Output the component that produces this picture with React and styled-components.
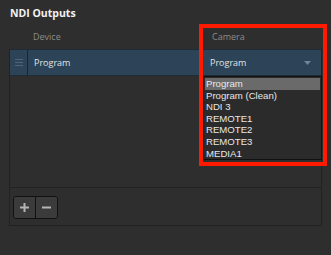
import styled, { createGlobalStyle } from "styled-components";

const GlobalStyle = createGlobalStyle`
  html, body {
    margin: 0;
    padding: 0;
    background: #2e2e2e;
    width: 331px;
    height: 255px;
    overflow: hidden;
  }
  #root {
    position: relative;
    width: 331px;
    height: 255px;
  }
`;

const Page = styled.div`
  position: relative;
  width: 331px;
  height: 255px;
  padding: 6px 9px 0 9px;
  box-sizing: border-box;
  font-family: "Open Sans", "Liberation Sans", sans-serif;
`;

const Title = styled.h2`
  margin: 0 0 0 1px;
  height: 15px;
  line-height: 15px;
  font-size: 10.5px;
  font-weight: 700;
  color: #f2f2f2;
`;

const HeaderRow = styled.div`
  display: grid;
  grid-template-columns: 18px 176px 1fr;
  height: 28px;
  align-items: center;
  font-size: 9px;
  color: #8c8c8c;
`;

const HeadCell = styled.div`
  padding-left: ${(p) => p.$pad}px;
  padding-top: 3px;
`;

const Table = styled.div`
  width: 313px;
  border-left: 1px solid #222;
  border-right: 1px solid #222;
  height: 138px;
  box-sizing: border-box;
`;

const Row = styled.div`
  display: grid;
  grid-template-columns: 18px 176px 1fr;
  height: 27px;
  align-items: center;
  background: #2c4358;
  border-top: 1px solid #1f2c38;
  border-bottom: 1px solid #1f2c38;
  box-sizing: border-box;
  font-size: 9px;
  color: #e4e4e4;
`;

const Handle = styled.div`
  height: 100%;
  border-right: 1px solid #1a2530;
  display: flex;
  flex-direction: column;
  justify-content: center;
  align-items: center;
  gap: 2px;

  span {
    display: block;
    width: 8px;
    height: 1px;
    background: #4e6578;
  }
`;

const Cell = styled.div`
  padding-left: ${(p) => p.$pad}px;
  display: flex;
  align-items: center;
  justify-content: space-between;
  padding-right: 10px;
`;

const Caret = styled.svg`
  width: 7px;
  height: 4px;
`;

const Toolbar = styled.div`
  width: 313px;
  height: 39px;
  border: 1px solid #222;
  box-sizing: border-box;
  padding: 8px 0 0 3px;
  display: flex;
`;

const ButtonGroup = styled.div`
  display: flex;
  border: 1px solid #111;
  border-radius: 3px;
  overflow: hidden;
  height: 21px;
`;

const ToolButton = styled.div`
  width: 21px;
  height: 21px;
  background: #3b3b3b;
  display: flex;
  align-items: center;
  justify-content: center;
  & + & {
    border-left: 1px solid #111;
  }
`;

const Dropdown = styled.ul`
  position: absolute;
  left: 203px;
  top: 76px;
  width: 119px;
  height: 84px;
  margin: 0;
  padding: 1px 1px;
  list-style: none;
  background: #2b2b2b;
  border: 1px solid #111;
  box-sizing: border-box;
  font-family: "Liberation Sans", Arial, sans-serif;
  font-size: 9.6px;
  color: #e8e8e8;
`;

const Option = styled.li`
  height: 11.6px;
  line-height: 11.6px;
  padding-left: 1px;
  background: ${(p) => (p.$active ? "#6a6a6a" : "transparent")};
`;

const Highlight = styled.div`
  position: absolute;
  left: 199px;
  top: 24px;
  width: 128px;
  height: 142px;
  border: 4.5px solid #ff1a00;
  box-sizing: border-box;
  pointer-events: none;
`;

const options = [
  "Program",
  "Program (Clean)",
  "NDI 3",
  "REMOTE1",
  "REMOTE2",
  "REMOTE3",
  "MEDIA1",
];

export default function App() {
  return (
    <>
      <GlobalStyle />
      <Page>
        <Title>NDI Outputs</Title>
        <HeaderRow>
          <div />
          <HeadCell $pad={6}>Device</HeadCell>
          <HeadCell $pad={9}>Camera</HeadCell>
        </HeaderRow>
        <Table>
          <Row>
            <Handle>
              <span />
              <span />
              <span />
            </Handle>
            <Cell $pad={6}>Program</Cell>
            <Cell $pad={6}>
              Program
              <Caret viewBox="0 0 7 4">
                <path d="M0 0 L7 0 L3.5 4 Z" fill="#6f8495" />
              </Caret>
            </Cell>
          </Row>
        </Table>
        <Toolbar>
          <ButtonGroup>
            <ToolButton>
              <svg width="9" height="9" viewBox="0 0 9 9">
                <path d="M3.5 0h2v3.5H9v2H5.5V9h-2V5.5H0v-2h3.5z" fill="#b5b5b5" />
              </svg>
            </ToolButton>
            <ToolButton>
              <svg width="9" height="9" viewBox="0 0 9 9">
                <rect x="0" y="3.5" width="9" height="2" fill="#b5b5b5" />
              </svg>
            </ToolButton>
          </ButtonGroup>
        </Toolbar>
        <Dropdown>
          {options.map((o, i) => (
            <Option key={o} $active={i === 0}>
              {o}
            </Option>
          ))}
        </Dropdown>
        <Highlight />
      </Page>
    </>
  );
}
